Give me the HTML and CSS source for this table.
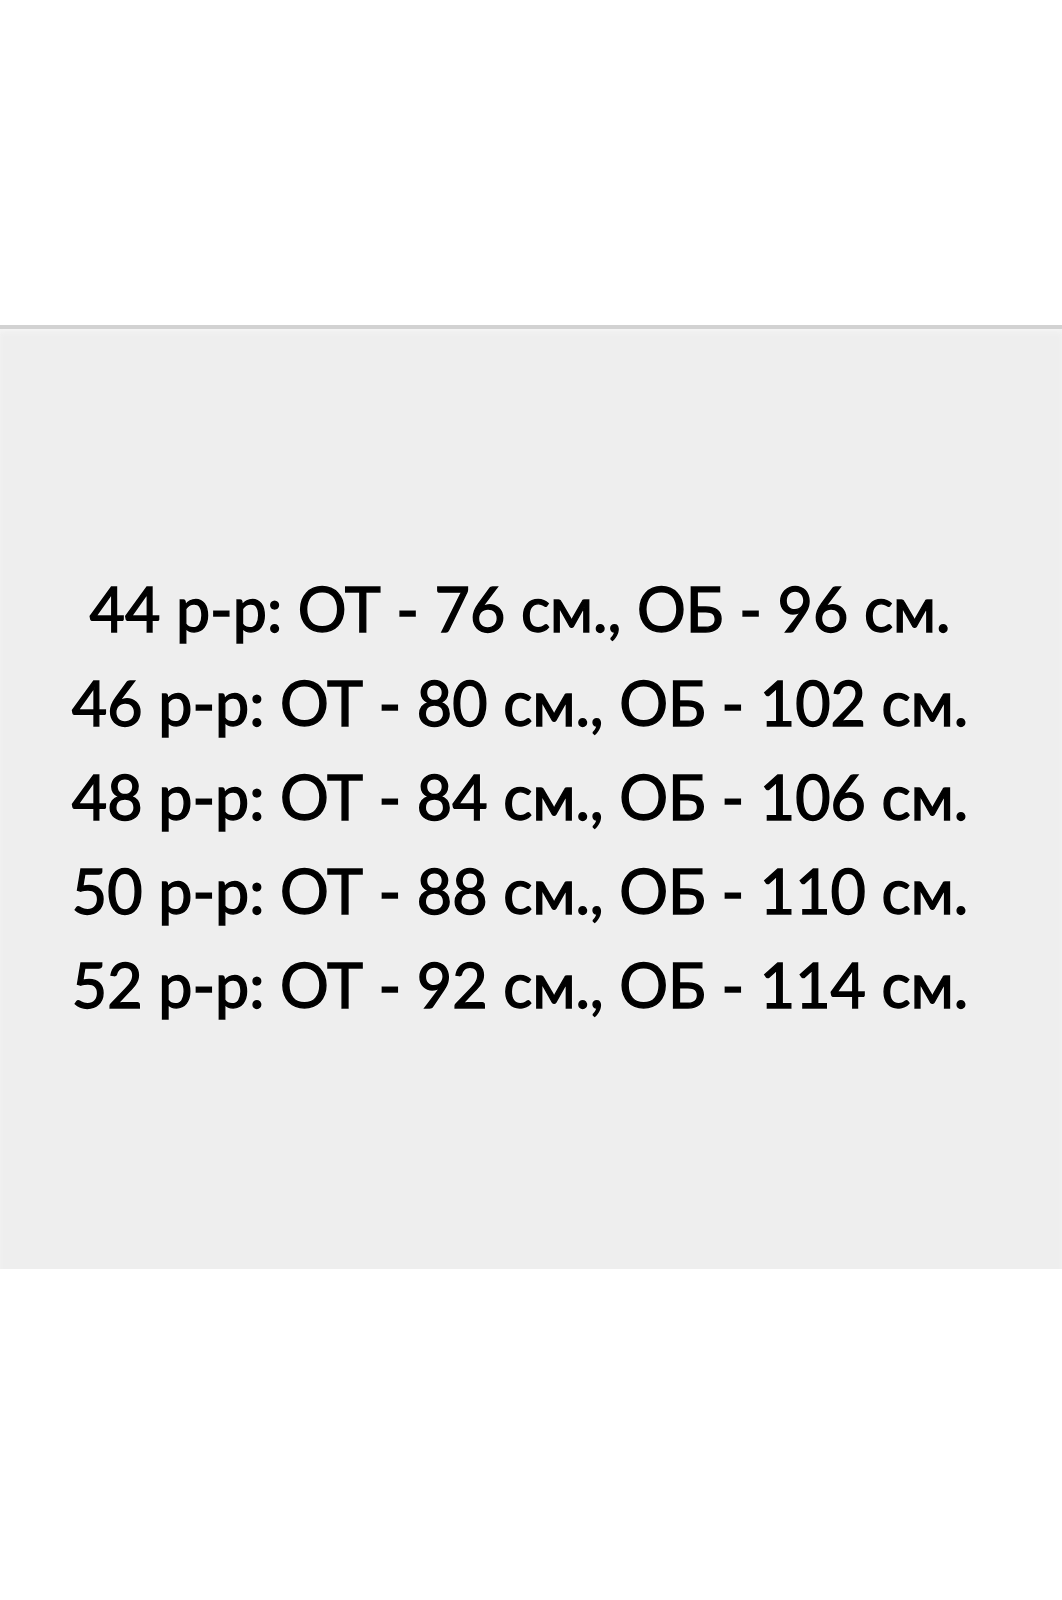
FILE: index.html
```html
<!DOCTYPE html>
<html lang="ru">
<head>
<meta charset="utf-8">
<link rel="stylesheet" href="styles.css">
</head>
<body>
<div class="top"></div>
<section class="panel">
  <div class="sizes">
    <p class="line">44 р-р: ОТ - 76 см., ОБ - 96 см.</p>
    <p class="line">46 р-р: ОТ - 80 см., ОБ - 102 см.</p>
    <p class="line">48 р-р: ОТ - 84 см., ОБ - 106 см.</p>
    <p class="line">50 р-р: ОТ - 88 см., ОБ - 110 см.</p>
    <p class="line">52 р-р: ОТ - 92 см., ОБ - 114 см.</p>
  </div>
</section>
<div class="bottom"></div>
</body>
</html>
```
FILE: styles.css
```css
html, body {
  margin: 0;
  padding: 0;
  background: #ffffff;
  width: 1062px;
  height: 1600px;
  overflow: hidden;
}
.top {
  height: 325px;
}
.panel {
  height: 944px;
  background: #eeeeee;
  border-top: 4px solid #d2d2d2;
  box-sizing: border-box;
  box-shadow: inset 0 4px 6px -2px #f6f6f6;
  display: flex;
  align-items: center;
  justify-content: center;
}
.sizes {
  display: flex;
  flex-direction: column;
  align-items: center;
  padding-right: 22px;
  padding-bottom: 4px;
}
.line {
  margin: 0;
  font-family: Lato, "Open Sans", sans-serif;
  font-size: 61px;
  font-weight: 400;
  -webkit-text-stroke: 1.4px #000000;
  line-height: 94px;
  color: #000000;
  white-space: nowrap;
  text-shadow: 0 0 2px #ffffff, 0 0 2px #ffffff, 0 0 3px #ffffff;
}
```
